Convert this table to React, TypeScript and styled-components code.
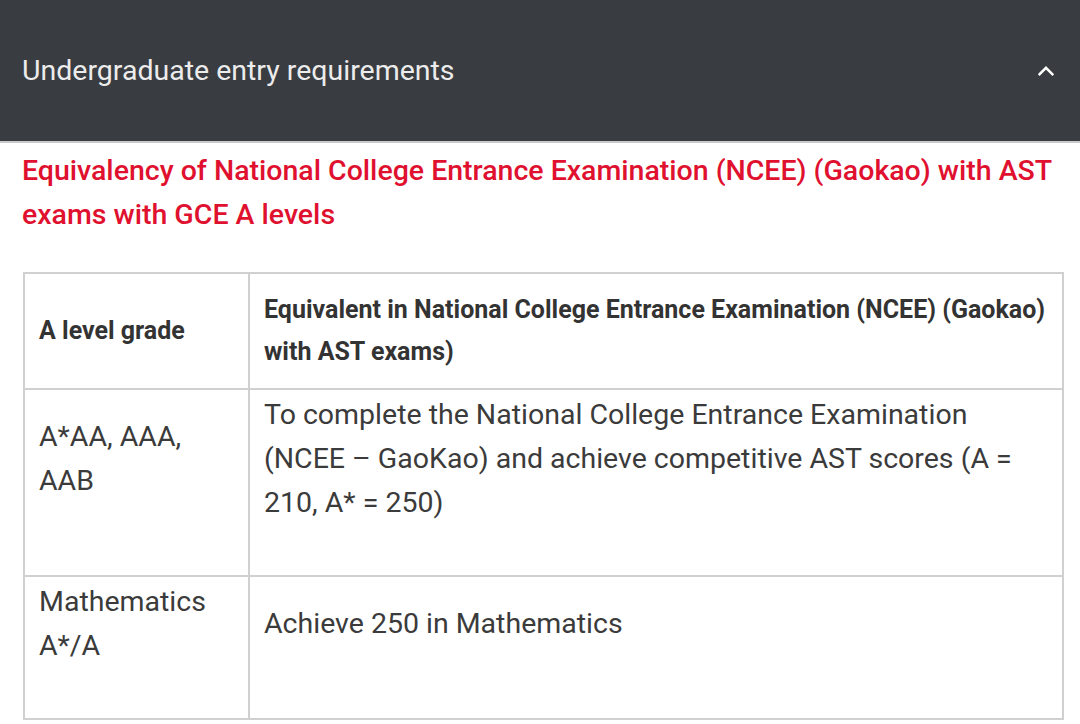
import React from 'react'
import styled, { createGlobalStyle } from 'styled-components'

const GlobalStyle = createGlobalStyle`
  html, body {
    margin: 0;
    padding: 0;
    background: #ffffff;
    font-family: Roboto, "Liberation Sans", Arial, sans-serif;
  }
`

const Page = styled.div`
  width: 1080px;
  min-height: 724px;
  background: #ffffff;
  overflow: hidden;
`

const AccordionHeader = styled.header`
  height: 143px;
  background: #393c40;
  border-bottom: 2px solid #c9c9c9;
  display: flex;
  align-items: center;
  justify-content: space-between;
  padding: 0 22px 0 22px;
  box-sizing: border-box;
`

const HeaderTitle = styled.h2`
  margin: 0;
  font-size: 28.5px;
  font-weight: 400;
  color: #ececec;
`

const Chevron = styled.svg`
  width: 22px;
  height: 22px;
  margin-right: 1px;
`

const Content = styled.section`
  padding: 6px 22px 0 22px;
`

const RedHeading = styled.h3`
  margin: 0 0 35px 0;
  font-size: 28.5px;
  line-height: 44px;
  font-weight: 500;
  color: #e0102f;
`

const Table = styled.table`
  width: 1041px;
  margin-left: 1px;
  border-collapse: collapse;
  table-layout: fixed;
  color: #3b3b3b;
`

const Col = styled.col<{ $w?: number }>`
  width: ${p => (p.$w ? `${p.$w}px` : 'auto')};
`

const Th = styled.th`
  border: 2px solid #d0d0d0;
  padding: 15px 14px;
  text-align: left;
  vertical-align: middle;
  font-size: 25px;
  line-height: 42px;
  font-weight: 700;
  color: #333333;
`

const Td = styled.td`
  border: 2px solid #d0d0d0;
  padding: 3px 14px 50px 14px;
  vertical-align: middle;
  font-size: 28.5px;
  line-height: 44px;
  font-weight: 400;
`

const App: React.FC = () => {
  return (
    <Page>
      <GlobalStyle />
      <AccordionHeader>
        <HeaderTitle>Undergraduate entry requirements</HeaderTitle>
        <Chevron viewBox="0 0 24 24" fill="none" stroke="#ffffff" strokeWidth="2.6" strokeLinecap="square">
          <path d="M5 15.5l7-7 7 7" />
        </Chevron>
      </AccordionHeader>
      <Content>
        <RedHeading>
          Equivalency of National College Entrance Examination (NCEE) (Gaokao) with AST exams with GCE A levels
        </RedHeading>
        <Table>
          <colgroup>
            <Col $w={225} />
            <Col />
          </colgroup>
          <thead>
            <tr>
              <Th>A level grade</Th>
              <Th>Equivalent in National College Entrance Examination (NCEE) (Gaokao) with AST exams)</Th>
            </tr>
          </thead>
          <tbody>
            <tr>
              <Td>A*AA, AAA, AAB</Td>
              <Td>
                To complete the National College Entrance Examination (NCEE – GaoKao) and achieve competitive AST scores (A = 210, A* = 250)
              </Td>
            </tr>
            <tr>
              <Td>Mathematics A*/A</Td>
              <Td>Achieve 250 in Mathematics</Td>
            </tr>
          </tbody>
        </Table>
      </Content>
    </Page>
  )
}

export default App
